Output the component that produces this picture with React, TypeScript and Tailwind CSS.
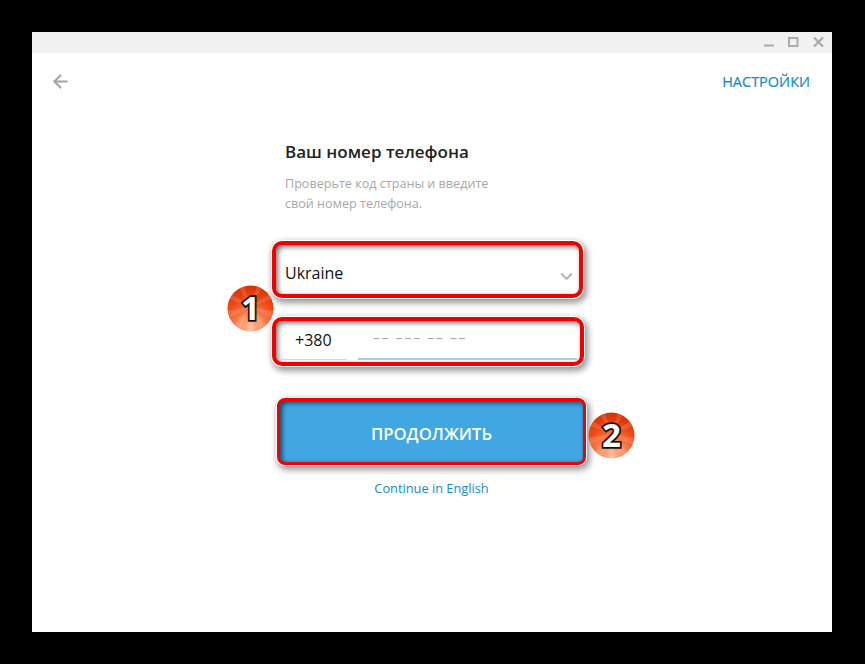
import { ArrowLeft, ChevronDown } from "lucide-react";

function Badge({ n, id, className }: { n: string; id: string; className: string }) {
  return (
    <svg viewBox="0 0 47 47" className={`absolute h-[47px] w-[47px] ${className}`}>
      <defs>
        <radialGradient id={id} cx="50%" cy="92%" r="88%">
          <stop offset="0%" stopColor="#ffbb98" />
          <stop offset="35%" stopColor="#fc8250" />
          <stop offset="70%" stopColor="#ef4a17" />
          <stop offset="100%" stopColor="#d73304" />
        </radialGradient>
      </defs>
      <circle cx="23.5" cy="23.5" r="23" fill={`url(#${id})`} />
      <path
        d="M23.5 22 L6 41 L13 45 Z M23.5 22 L20 47 L27 47 Z M23.5 22 L34 45 L41 41 Z M23.5 22 L1 26 L2 33 Z M23.5 22 L46 26 L45 33 Z M23.5 22 L5 9 L2 14 Z M23.5 22 L42 9 L45 14 Z M23.5 22 L17 1 L12 3 Z M23.5 22 L30 1 L35 3 Z"
        fill="#ffffff"
        opacity="0.13"
      />
      <text
        x="23.5"
        y="35"
        textAnchor="middle"
        fontFamily="'Open Sans', sans-serif"
        fontWeight="700"
        fontSize="33"
        fill="#ffffff"
        stroke="#111111"
        strokeWidth="3.5"
        paintOrder="stroke"
      >
        {n}
      </text>
    </svg>
  );
}

export default function App() {
  return (
    <div className="relative h-[664px] w-[865px] overflow-hidden bg-black pl-8 pt-8 font-['Open_Sans',sans-serif]">
      <div className="flex h-[600px] w-[800px] flex-col bg-white">
        <div className="flex h-[21px] items-start justify-end bg-[#f1f1f1] pr-[7px] text-[#ababab]">
          <svg width="61" height="21" viewBox="0 0 61 21" fill="none" stroke="currentColor">
            <path d="M0 13.5H10" strokeWidth="2" />
            <rect x="25" y="6" width="8.5" height="8" strokeWidth="2" />
            <path d="M50 5.5L59 14.5M59 5.5L50 14.5" strokeWidth="2.2" />
          </svg>
        </div>

        <div className="flex h-[58px] items-center justify-between pl-[18px] pr-[22px]">
          <ArrowLeft size={21} strokeWidth={2.4} className="mb-[2px] text-[#a3a3a3]" />
          <span className="text-[14.5px] font-normal text-[#168acd] [-webkit-text-stroke:0.2px_#168acd]">
            НАСТРОЙКИ
          </span>
        </div>

        <div className="ml-[240px] w-[316px]">
          <h1 className="ml-[13px] mt-[29px] text-[17px] font-semibold leading-[24px] text-[#222222]">
            Ваш номер телефона
          </h1>
          <p className="ml-[13px] mt-[10px] text-[12.6px] leading-[20px] text-[#a8a8a8]">
            Проверьте код страны и введите
            <br />
            свой номер телефона.
          </p>

          <div className="mt-[27px] flex h-[57px] w-[311px] items-center justify-between rounded-[10px] border-4 border-[#f00000] bg-white pl-[9px] pr-[3px] pt-[2px] shadow-[0_0_0_1px_#ffffff,2px_3px_6px_2px_rgba(0,0,0,0.4),inset_2px_2px_5px_rgba(0,0,0,0.55)]">
            <span className="pt-[4px] text-[16px] text-[#111111]">Ukraine</span>
            <ChevronDown size={19} strokeWidth={2.6} className="mt-[12px] text-[#b0b0b0]" />
          </div>

          <div className="mt-[19px] flex h-[49px] w-[312px] items-end gap-[11px] rounded-[10px] border-4 border-[#f00000] bg-white px-[3px] pb-[2px] shadow-[0_0_0_1px_#ffffff,2px_3px_6px_2px_rgba(0,0,0,0.4),inset_2px_2px_5px_rgba(0,0,0,0.55)]">
            <div className="h-[36px] w-[68px] border-b border-[#d6d6d6] pl-[16px] pt-[4px] text-[16px] leading-[24px] text-[#111111]">
              +380
            </div>
            <div className="h-[36px] flex-1 border-b-2 border-[#a9cbe6] pl-[15px] pt-[2px] text-[14px] leading-[24px] tracking-[1.7px] text-[#aaaaaa]">
              –– ––– –– ––
            </div>
          </div>

          <div className="ml-[5px] mt-[32px] flex h-[67px] w-[309px] items-center justify-center rounded-[8px] border-[3px] border-[#f00000] bg-[#40a7e3] pt-[5px] text-[16.7px] font-semibold text-white shadow-[0_0_0_1px_#ffffff,2px_3px_6px_2px_rgba(0,0,0,0.4),inset_2px_2px_5px_rgba(0,0,0,0.6)]">
            ПРОДОЛЖИТЬ
          </div>

          <div className="ml-[5px] mt-[14px] w-[309px] text-center text-[12.8px] leading-[18px] text-[#168acd]">
            Continue in English
          </div>
        </div>
      </div>

      <Badge n="1" id="badge-one" className="left-[227px] top-[285px]" />
      <Badge n="2" id="badge-two" className="left-[588px] top-[412px]" />
    </div>
  );
}
